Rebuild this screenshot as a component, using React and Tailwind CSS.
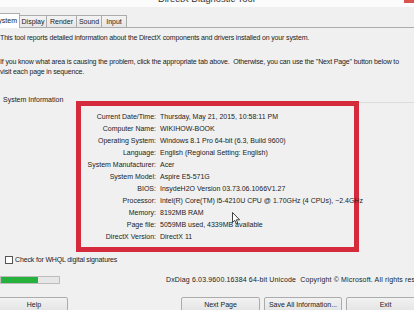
import React from "react";

const rows = [
  ["Current Date/Time:", "Thursday, May 21, 2015, 10:58:11 PM"],
  ["Computer Name:", "WIKIHOW-BOOK"],
  ["Operating System:", "Windows 8.1 Pro 64-bit (6.3, Build 9600)"],
  ["Language:", "English (Regional Setting: English)"],
  ["System Manufacturer:", "Acer"],
  ["System Model:", "Aspire E5-571G"],
  ["BIOS:", "InsydeH2O Version 03.73.06.1066V1.27"],
  ["Processor:", "Intel(R) Core(TM) i5-4210U CPU @ 1.70GHz (4 CPUs), ~2.4GHz"],
  ["Memory:", "8192MB RAM"],
  ["Page file:", "5059MB used, 4339MB available"],
  ["DirectX Version:", "DirectX 11"],
];

function Tab({ label, w }) {
  return (
    <div
      className={`h-[13px] ${w} border border-l-0 border-[#acacac] bg-gradient-to-b from-[#f3f3f3] to-[#e6e6e6] flex items-center justify-center leading-[10px]`}
    >
      {label}
    </div>
  );
}

function Btn({ children, w, extra = "" }) {
  return (
    <div
      className={`h-[16px] ${w} shrink-0 border border-[#acacac] rounded-[2px] bg-gradient-to-b from-[#f2f2f2] to-[#e3e3e3] flex items-center justify-center leading-[10px] text-[#222] ${extra}`}
    >
      {children}
    </div>
  );
}

export default function App() {
  return (
    <div
      className="relative w-[414px] h-[310px] overflow-hidden bg-[#f0f0f0] text-[7px] text-[#222]"
      style={{ fontFamily: '"Liberation Sans", Arial, sans-serif' }}
    >
      {/* title bar */}
      <div className="h-[7px] bg-[#fbfbfb] overflow-hidden flex justify-between">
        <div className="ml-[158px] -mt-[6px] text-[9.4px] leading-[9px] text-[#333] whitespace-nowrap">
          DirectX Diagnostic Tool
        </div>
        <div className="w-[10px] h-[3px] bg-[#d9534f]" />
      </div>

      {/* tabs */}
      <div className="h-[21px] flex items-end">
        <div className="h-[15px] w-[20px] bg-white border-r border-t border-[#acacac] flex justify-end items-center overflow-hidden leading-[10px] pr-[2px]">
          <span className="whitespace-nowrap">System</span>
        </div>
        <Tab label="Display" w="w-[27px]" />
        <Tab label="Render" w="w-[30px]" />
        <Tab label="Sound" w="w-[25px]" />
        <Tab label="Input" w="w-[25px]" />
        <div className="flex-1 border-b border-[#acacac]" />
      </div>

      {/* description */}
      <div className="mt-[5px] leading-[10px] whitespace-pre tracking-[-0.15px]">
        This tool reports detailed information about the DirectX components and drivers installed on your system.
      </div>
      <div className="mt-[14px] leading-[10px] whitespace-pre tracking-[-0.15px]">
        <div>If you know what area is causing the problem, click the appropriate tab above.  Otherwise, you can use the "Next Page" button below to</div>
        <div>visit each page in sequence.</div>
      </div>

      {/* system information group */}
      <div className="mt-[18px] flex items-start">
        <div className="w-[76px] shrink-0 pl-[3px] leading-[10px] whitespace-nowrap">
          System Information
        </div>
        <div className="mt-[6px] w-[283px] h-[151px] shrink-0 border-[5px] border-[#d42a3c] pt-[5px] pb-[4px]">
          {rows.map(([k, v]) => (
            <div key={k} className="flex leading-[12px] whitespace-nowrap">
              <div className="w-[75px] shrink-0 text-right">{k}</div>
              <div className="ml-[4px]">{v}</div>
            </div>
          ))}
        </div>
        <div className="flex-1 mt-[7px] border-t border-[#dcdcdc]" />
      </div>

      {/* checkbox */}
      <div className="mt-[3px] flex items-center pl-[5px] leading-[10px]">
        <div className="w-[8px] h-[8px] border border-[#555] bg-white" />
        <span className="ml-[2px] tracking-[-0.15px]">Check for WHQL digital signatures</span>
      </div>

      {/* progress + copyright */}
      <div className="mt-[10px] flex items-center">
        <div className="w-[60px] h-[8px] border border-[#bcbcbc] bg-[#e6e6e6] shrink-0 flex">
          <div className="w-[37px] h-full bg-[#26b03c]" />
        </div>
        <div className="ml-[106px] whitespace-pre leading-[10px] tracking-[0.15px]">
          DxDiag 6.03.9600.16384 64-bit Unicode  Copyright © Microsoft. All rights reserved.
        </div>
      </div>

      {/* buttons */}
      <div className="mt-[12px] flex">
        <Btn w="w-[78px]" extra="-ml-[10px]">
          <span className="ml-[10px]">Help</span>
        </Btn>
        <Btn w="w-[79px]" extra="ml-[113px] border-[#7aa7d6]">Next Page</Btn>
        <Btn w="w-[78px]" extra="ml-[4px]">Save All Information...</Btn>
        <Btn w="w-[79px]" extra="ml-[4px]">Exit</Btn>
      </div>

      {/* mouse cursor */}
      <svg
        className="absolute left-[232px] top-[212px]"
        width="9"
        height="13"
        viewBox="0 0 9 13"
      >
        <path
          d="M0.5 0.5 L0.5 10.5 L2.8 8.3 L4.4 12 L5.9 11.3 L4.4 7.8 L7.6 7.8 Z"
          fill="#fff"
          stroke="#111"
          strokeWidth="0.8"
          strokeLinejoin="round"
        />
      </svg>
    </div>
  );
}
